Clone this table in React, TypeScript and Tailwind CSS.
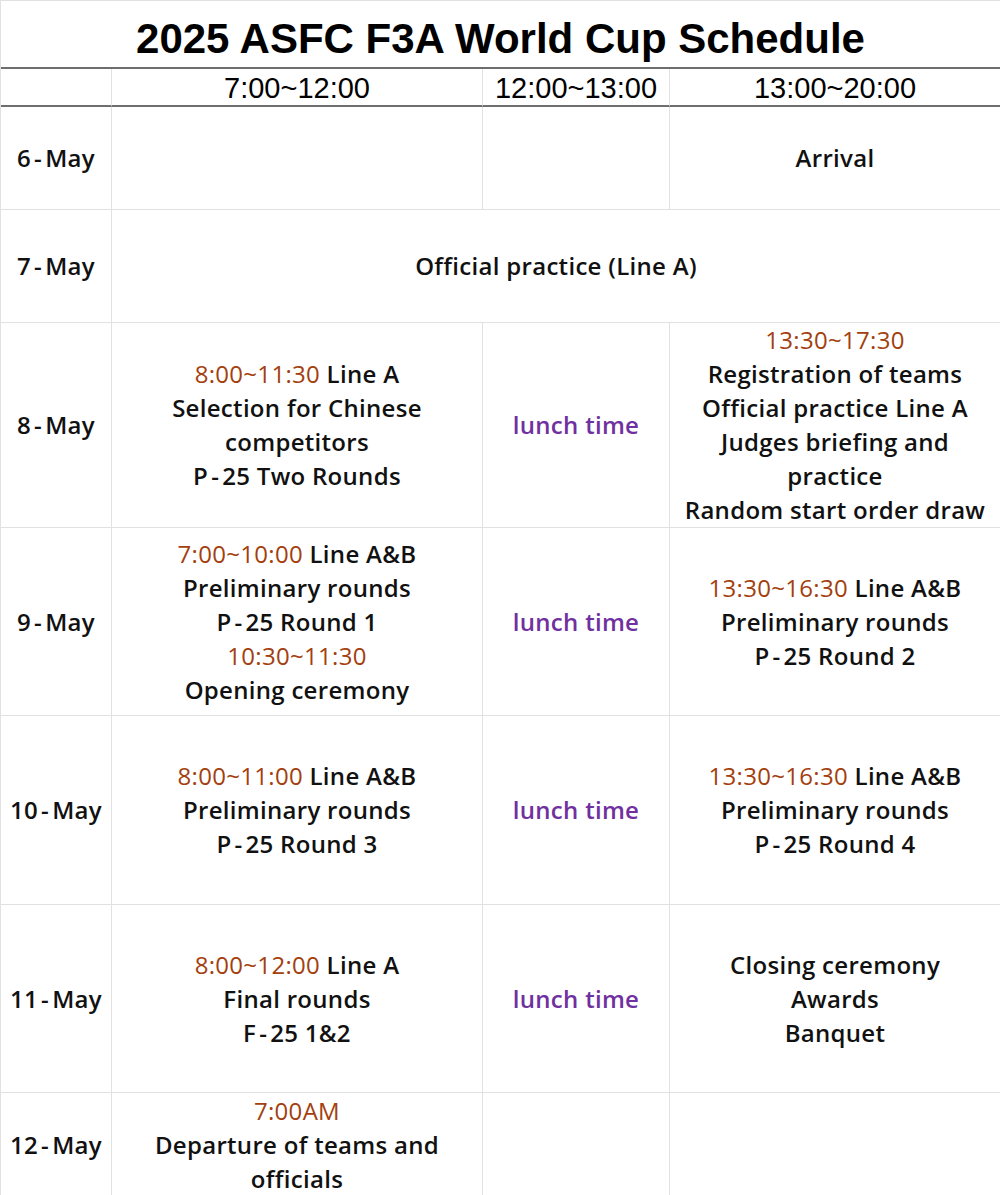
const T = ({ children }: { children: React.ReactNode }) => (
  <span className="font-medium text-[#a3400e]">{children}</span>
);

// YaHei-style hyphen sits with wide side bearings
const H = () => <span className="mx-[3px]">-</span>;

function Cell({
  children,
  className = "",
}: {
  children?: React.ReactNode;
  className?: string;
}) {
  return (
    <div
      className={`flex flex-col items-center justify-center border-r border-b border-[#e1e1e1] text-center leading-[34px] ${className}`}
    >
      {children}
    </div>
  );
}

const Lunch = () => <span className="text-[#7030a0]">lunch time</span>;

export default function App() {
  return (
    <div className="h-[1195px] w-[1000px] overflow-hidden bg-white">
      <div
        className="grid grid-cols-[111px_371px_187px_331px] grid-rows-[68px_38px_103px_113px_205px_188px_189px_188px_104px] border-t border-l border-[#e1e1e1] text-[24px] font-semibold tracking-[0.3px] text-[#111]"
        style={{ fontFamily: '"Open Sans", "Noto Sans", sans-serif' }}
      >
        {/* title */}
        <div
          className="col-span-4 flex items-center justify-center border-r border-b-2 border-r-[#e1e1e1] border-b-[#6e6e6e] pt-2 text-[42px] font-bold tracking-normal text-black"
          style={{ fontFamily: '"Liberation Sans", Arial, sans-serif' }}
        >
          2025 ASFC F3A World Cup Schedule
        </div>

        {/* header */}
        {["", "7:00~12:00", "12:00~13:00", "13:00~20:00"].map((h, i) => (
          <div
            key={i}
            className="flex items-center justify-center border-r border-b-2 border-r-[#e1e1e1] border-b-[#6e6e6e] pt-1 text-[29px] font-normal tracking-normal text-black"
            style={{ fontFamily: '"Liberation Sans", Arial, sans-serif' }}
          >
            {h}
          </div>
        ))}

        {/* 6-May */}
        <Cell>
          <div>
            6<H />May
          </div>
        </Cell>
        <Cell />
        <Cell />
        <Cell>Arrival</Cell>

        {/* 7-May */}
        <Cell>
          <div>
            7<H />May
          </div>
        </Cell>
        <Cell className="col-span-3">Official practice (Line A)</Cell>

        {/* 8-May */}
        <Cell>
          <div>
            8<H />May
          </div>
        </Cell>
        <Cell>
          <div>
            <T>8:00~11:30</T> Line A
          </div>
          <div>Selection for Chinese</div>
          <div>competitors</div>
          <div>
            P<H />25 Two Rounds
          </div>
        </Cell>
        <Cell>
          <Lunch />
        </Cell>
        <Cell>
          <div>
            <T>13:30~17:30</T>
          </div>
          <div>Registration of teams</div>
          <div>Official practice Line A</div>
          <div>Judges briefing and</div>
          <div>practice</div>
          <div>Random start order draw</div>
        </Cell>

        {/* 9-May */}
        <Cell>
          <div>
            9<H />May
          </div>
        </Cell>
        <Cell>
          <div>
            <T>7:00~10:00</T> Line A&amp;B
          </div>
          <div>Preliminary rounds</div>
          <div>
            P<H />25 Round 1
          </div>
          <div>
            <T>10:30~11:30</T>
          </div>
          <div>Opening ceremony</div>
        </Cell>
        <Cell>
          <Lunch />
        </Cell>
        <Cell>
          <div>
            <T>13:30~16:30</T> Line A&amp;B
          </div>
          <div>Preliminary rounds</div>
          <div>
            P<H />25 Round 2
          </div>
        </Cell>

        {/* 10-May */}
        <Cell>
          <div>
            10<H />May
          </div>
        </Cell>
        <Cell>
          <div>
            <T>8:00~11:00</T> Line A&amp;B
          </div>
          <div>Preliminary rounds</div>
          <div>
            P<H />25 Round 3
          </div>
        </Cell>
        <Cell>
          <Lunch />
        </Cell>
        <Cell>
          <div>
            <T>13:30~16:30</T> Line A&amp;B
          </div>
          <div>Preliminary rounds</div>
          <div>
            P<H />25 Round 4
          </div>
        </Cell>

        {/* 11-May */}
        <Cell>
          <div>
            11<H />May
          </div>
        </Cell>
        <Cell>
          <div>
            <T>8:00~12:00</T> Line A
          </div>
          <div>Final rounds</div>
          <div>
            F<H />25 1&amp;2
          </div>
        </Cell>
        <Cell>
          <Lunch />
        </Cell>
        <Cell>
          <div>Closing ceremony</div>
          <div>Awards</div>
          <div>Banquet</div>
        </Cell>

        {/* 12-May */}
        <Cell>
          <div>
            12<H />May
          </div>
        </Cell>
        <Cell>
          <div>
            <T>7:00AM</T>
          </div>
          <div>Departure of teams and</div>
          <div>officials</div>
        </Cell>
        <Cell />
        <Cell />
      </div>
    </div>
  );
}
